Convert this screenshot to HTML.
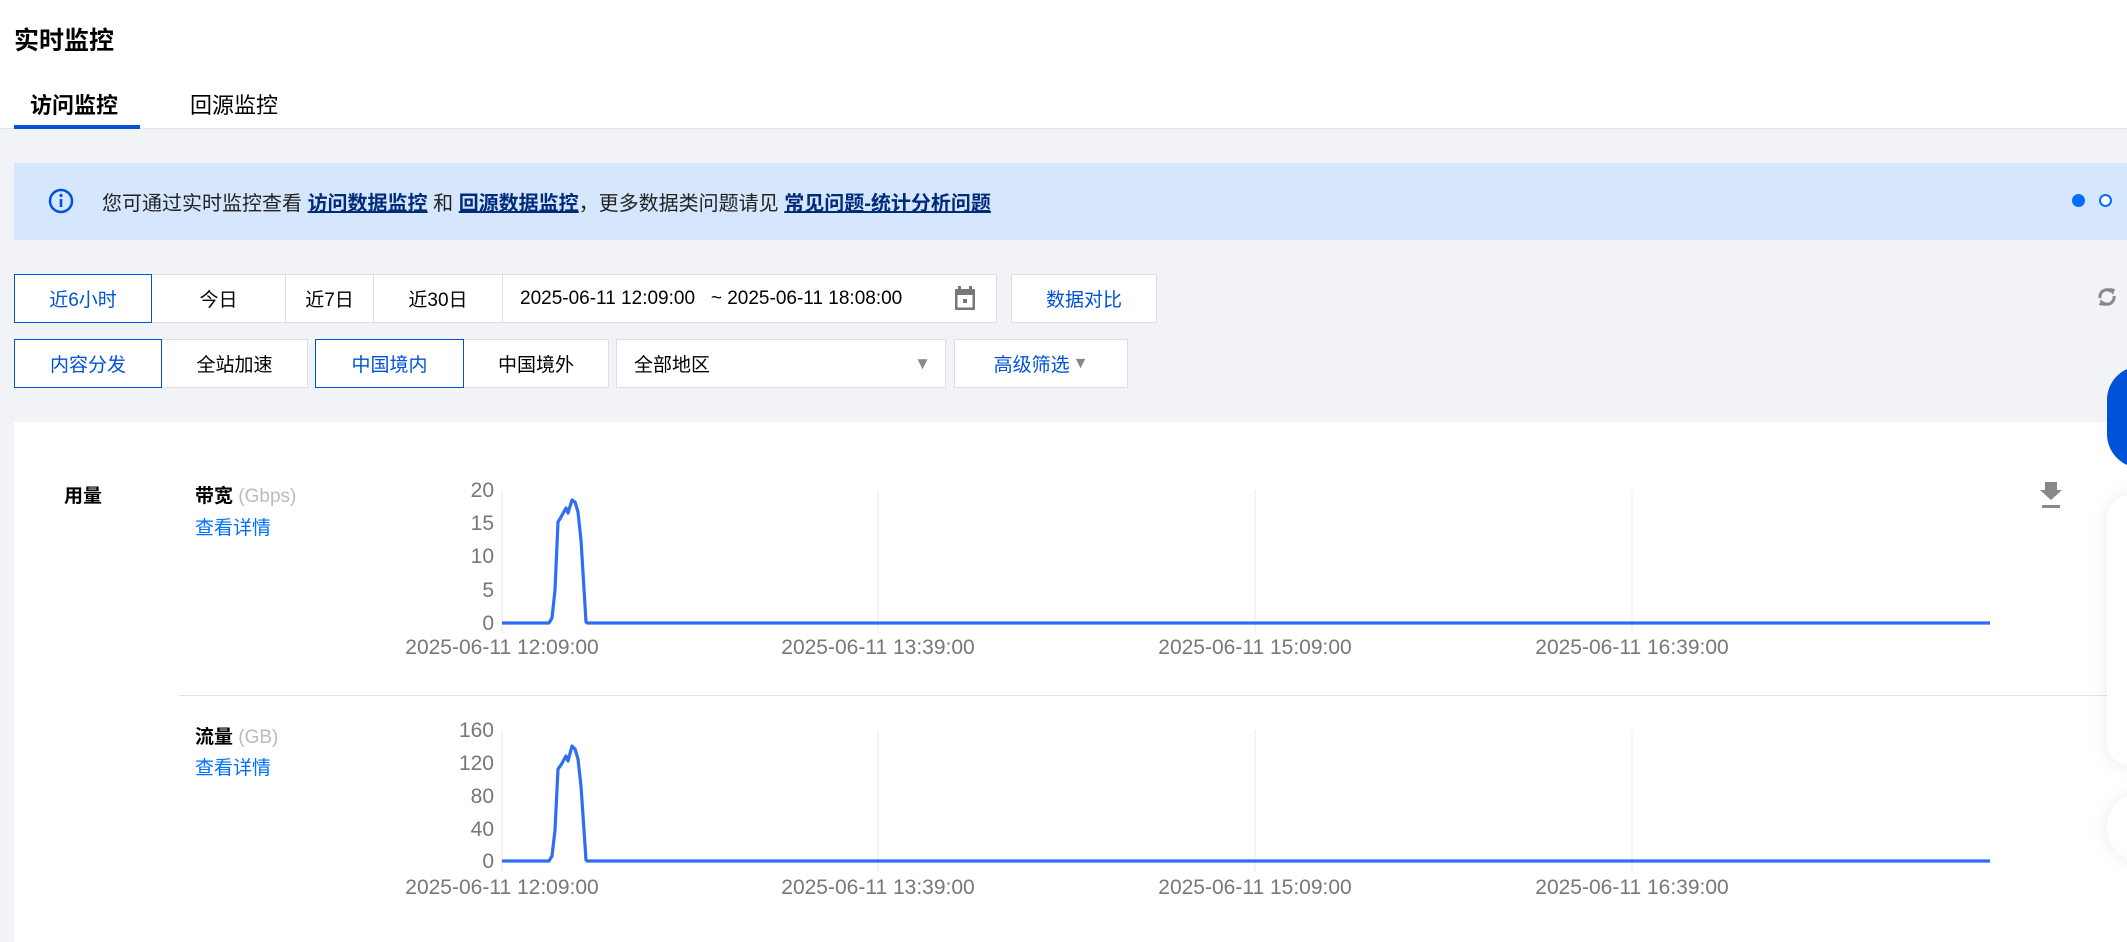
<!DOCTYPE html>
<html><head><meta charset="utf-8"><style>
*{margin:0;padding:0;box-sizing:border-box}
body{width:2127px;height:930px;overflow:hidden;background:#f2f3f7;font-family:"Liberation Sans","Noto Sans CJK SC",sans-serif;position:relative;color:#000}
.a{position:absolute;white-space:nowrap}
.btn{position:absolute;background:#fff;border:1px solid #dcdfe6;font-size:19px;color:#000;display:flex;align-items:center;justify-content:center}
.on{border-color:#0052d9;color:#0052d9;z-index:2}
</style></head><body>
<div class="a" style="left:0;top:0;width:2127px;height:129px;background:#fff;border-bottom:1px solid #e3e5ea"></div>
<div class="a" style="left:14px;top:21px;font-size:25px;font-weight:bold">实时监控</div>
<div class="a" style="left:30px;top:88px;font-size:22px;font-weight:bold">访问监控</div>
<div class="a" style="left:190px;top:88px;font-size:22px">回源监控</div>
<div class="a" style="left:14px;top:125px;width:126px;height:4px;background:#0052d9"></div>

<div class="a" style="left:14px;top:163px;width:2113px;height:77px;background:#d5e6fd"></div>
<svg class="a" style="left:48px;top:188px" width="26" height="26" viewBox="0 0 26 26"><circle cx="13" cy="13" r="11" fill="none" stroke="#0052d9" stroke-width="2.5"/><rect x="11.7" y="11" width="2.6" height="8" fill="#0052d9"/><circle cx="13" cy="7.5" r="1.6" fill="#0052d9"/></svg>
<div class="a" style="left:102px;top:187px;font-size:20px;color:#222">您可通过实时监控查看 <b style="color:#002a7a;text-decoration:underline">访问数据监控</b> 和 <b style="color:#002a7a;text-decoration:underline">回源数据监控</b>，更多数据类问题请见 <b style="color:#002a7a;text-decoration:underline">常见问题-统计分析问题</b></div>
<div class="a" style="left:2072px;top:194px;width:13px;height:13px;border-radius:50%;background:#006eff"></div>
<div class="a" style="left:2099px;top:194px;width:13px;height:13px;border-radius:50%;background:#fff;border:2px solid #006eff"></div>

<div class="btn on" style="left:14px;top:274px;width:138px;height:49px">近6小时</div>
<div class="btn" style="left:151px;top:274px;width:135px;height:49px">今日</div>
<div class="btn" style="left:285px;top:274px;width:89px;height:49px">近7日</div>
<div class="btn" style="left:373px;top:274px;width:130px;height:49px">近30日</div>
<div class="btn" style="left:502px;top:274px;width:495px;height:49px;justify-content:flex-start;padding-left:17px">2025-06-11 12:09:00 &nbsp;&nbsp;~ 2025-06-11 18:08:00</div>
<svg class="a" style="left:953px;top:285px" width="24" height="27" viewBox="0 0 24 27"><rect x="2" y="4" width="20" height="21" rx="1" fill="#777"/><rect x="4.5" y="10" width="15" height="12.5" fill="#fff"/><rect x="5" y="1" width="3" height="5" fill="#777"/><rect x="16" y="1" width="3" height="5" fill="#777"/><rect x="10" y="14" width="4" height="4" fill="#777"/></svg>
<div class="btn" style="left:1011px;top:274px;width:146px;height:49px;color:#0052d9">数据对比</div>
<svg class="a" style="left:2095px;top:285px" width="24" height="24" viewBox="0 0 24 24"><path d="M5 13a7 7 0 0 1 12-6" fill="none" stroke="#888" stroke-width="3"/><path d="M19 11a7 7 0 0 1-12 6" fill="none" stroke="#888" stroke-width="3"/><path d="M14 3l6 1-2 6z" fill="#888"/><path d="M10 21l-6-1 2-6z" fill="#888"/></svg>

<div class="btn on" style="left:14px;top:339px;width:148px;height:49px">内容分发</div>
<div class="btn" style="left:161px;top:339px;width:147px;height:49px">全站加速</div>
<div class="btn on" style="left:315px;top:339px;width:149px;height:49px">中国境内</div>
<div class="btn" style="left:463px;top:339px;width:146px;height:49px">中国境外</div>
<div class="btn" style="left:616px;top:339px;width:330px;height:49px;justify-content:flex-start;padding-left:17px">全部地区<span style="position:absolute;right:14px;color:#888;font-size:17px">▼</span></div>
<div class="btn" style="left:954px;top:339px;width:174px;height:49px;color:#0052d9">高级筛选<span style="color:#888;font-size:16px;margin-left:3px">▼</span></div>

<div class="a" style="left:14px;top:422px;width:2113px;height:520px;background:#fff"></div>
<div class="a" style="left:64px;top:481px;font-size:19px;font-weight:bold">用量</div>
<div class="a" style="left:195px;top:481px;font-size:19px;font-weight:bold">带宽 <span style="font-weight:normal;color:#bbb;font-size:19px">(Gbps)</span></div>
<div class="a" style="left:195px;top:513px;font-size:19px;color:#006eff">查看详情</div>
<div class="a" style="left:195px;top:722px;font-size:19px;font-weight:bold">流量 <span style="font-weight:normal;color:#bbb;font-size:19px">(GB)</span></div>
<div class="a" style="left:195px;top:753px;font-size:19px;color:#006eff">查看详情</div>
<div class="a" style="left:179px;top:695px;width:1930px;height:1px;background:#e3e3e3"></div>

<svg class="a" style="left:0;top:0" width="2127" height="930" font-family="Liberation Sans, sans-serif" fill="#777">
<g stroke="#f0f0f0" stroke-width="1.5"><line x1="502" y1="490" x2="502" y2="633"/><line x1="878" y1="490" x2="878" y2="633"/><line x1="1255" y1="490" x2="1255" y2="633"/><line x1="1632" y1="490" x2="1632" y2="633"/>
<line x1="502" y1="730" x2="502" y2="871"/><line x1="878" y1="730" x2="878" y2="871"/><line x1="1255" y1="730" x2="1255" y2="871"/><line x1="1632" y1="730" x2="1632" y2="871"/></g>
<g text-anchor="end" font-size="21"><text x="494" y="497">20</text><text x="494" y="530">15</text><text x="494" y="563">10</text><text x="494" y="597">5</text><text x="494" y="630">0</text>
<text x="494" y="737">160</text><text x="494" y="770">120</text><text x="494" y="803">80</text><text x="494" y="836">40</text><text x="494" y="868">0</text></g>
<g text-anchor="middle" font-size="21"><text x="502" y="654">2025-06-11 12:09:00</text><text x="878" y="654">2025-06-11 13:39:00</text><text x="1255" y="654">2025-06-11 15:09:00</text><text x="1632" y="654">2025-06-11 16:39:00</text>
<text x="502" y="894">2025-06-11 12:09:00</text><text x="878" y="894">2025-06-11 13:39:00</text><text x="1255" y="894">2025-06-11 15:09:00</text><text x="1632" y="894">2025-06-11 16:39:00</text></g>
<g fill="none" stroke="#2e6df5" stroke-width="3.2" stroke-linejoin="round">
<path d="M502 623 L549 623 L552 618 L555 590 L558 522 L561 517 L566 508 L568 513 L572 500 L575 502 L578 512 L581 540 L586 622 L587 623 L1990 623"/>
<path d="M502 861 L549 861 L552 856 L555 830 L558 769 L561 765 L566 756 L568 761 L572 746 L575 749 L578 759 L581 786 L586 860 L587 861 L1990 861"/>
</g>
<path d="M2045 482h12v8h5l-11 10-11-10h5z M2042 505h18v3h-18z" fill="#888"/>
</svg>

<div class="a" style="left:2107px;top:366px;width:40px;height:102px;border-radius:34px 0 0 34px;background:#0052d9"></div>
<div class="a" style="left:2107px;top:495px;width:40px;height:271px;border-radius:24px 0 0 24px;background:#fff;box-shadow:0 0 20px rgba(0,0,0,.08)"></div>
<div class="a" style="left:2107px;top:793px;width:40px;height:68px;border-radius:34px 0 0 34px;background:#fff;box-shadow:0 0 20px rgba(0,0,0,.08)"></div>
</body></html>
